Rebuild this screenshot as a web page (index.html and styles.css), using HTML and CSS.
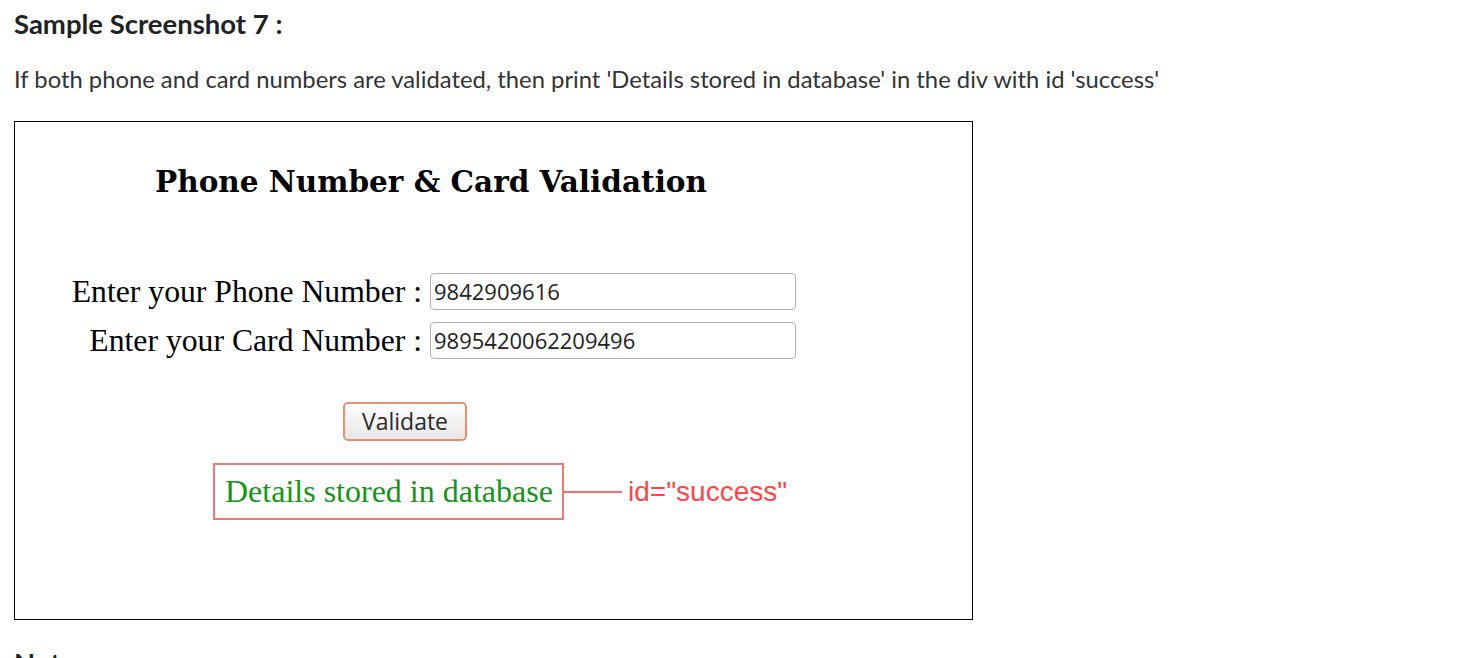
FILE: index.html
```html
<!DOCTYPE html>
<html>
<head>
<meta charset="utf-8">
<link rel="stylesheet" href="styles.css">
</head>
<body>
<h3 class="title">Sample Screenshot 7 :</h3>
<p class="desc">If both phone and card numbers are validated, then print 'Details stored in database' in the div with id 'success'</p>
<div class="shot">
  <h2 class="shot-title">Phone Number &amp; Card Validation</h2>
  <div class="rows">
    <div class="row"><label class="lbl">Enter your Phone Number :</label><div class="inp">9842909616</div></div>
    <div class="row"><label class="lbl">Enter your Card Number :</label><div class="inp">9895420062209496</div></div>
  </div>
  <div class="btn-wrap"><span class="btn">Validate</span></div>
  <div class="result">
    <div class="success">Details stored in database</div>
    <span class="connector"></span>
    <span class="id-note">id="success"</span>
  </div>
</div>
<h3 class="note">Note :</h3>
</body>
</html>
```
FILE: styles.css
```css
body {
  margin: 0;
  padding: 0 14px;
  font-family: Lato, "Liberation Sans", sans-serif;
  color: #333;
  background: #fff;
}
.title {
  margin: 0;
  padding-top: 8px;
  font-size: 27.5px;
  font-weight: 700;
  color: #222;
  line-height: 32px;
}
.desc {
  margin: 24px 0 0;
  font-size: 23.8px;
  line-height: 30px;
  color: #333;
}
.shot {
  margin-top: 27px;
  width: 957px;
  height: 497px;
  border: 1px solid #000;
  font-family: "Liberation Serif", serif;
  color: #000;
}
.shot-title {
  margin: 40px 0 0 140px;
  font-family: "DejaVu Serif", serif;
  font-size: 29.5px;
  font-weight: 700;
  line-height: 40px;
}
.rows {
  margin-top: 71px;
  display: flex;
  flex-direction: column;
  gap: 12px;
}
.row {
  display: flex;
  align-items: center;
  height: 37px;
}
.lbl {
  width: 415px;
  flex: none;
  text-align: right;
  font-size: 31.7px;
  line-height: 37px;
  padding-right: 8px;
  box-sizing: border-box;
  white-space: nowrap;
}
.inp {
  width: 366px;
  height: 37px;
  box-sizing: border-box;
  border: 1px solid #b0b0b0;
  border-radius: 4px;
  font-family: "Open Sans", sans-serif;
  font-size: 22px;
  line-height: 35px;
  padding-left: 3px;
  color: #222;
}
.btn-wrap {
  margin-top: 43px;
  padding-left: 328px;
}
.btn {
  display: inline-block;
  width: 124px;
  height: 39px;
  box-sizing: border-box;
  border: 2px solid #e89070;
  border-radius: 5px;
  background: linear-gradient(#fdfdfd, #e6e6e6);
  font-family: "Open Sans", sans-serif;
  font-size: 23px;
  line-height: 35px;
  text-align: center;
  color: #2a2a2a;
}
.result {
  margin-top: 22px;
  padding-left: 198px;
  display: flex;
  align-items: center;
}
.success {
  width: 351px;
  height: 57px;
  box-sizing: border-box;
  border: 2px solid #f07878;
  font-size: 32px;
  color: #15941a;
  line-height: 53px;
  padding-left: 10px;
  white-space: nowrap;
}
.connector {
  width: 58px;
  height: 2px;
  background: #f07070;
}
.id-note {
  margin-left: 6px;
  font-family: "Liberation Sans", sans-serif;
  font-size: 28px;
  color: #ff4646;
}
.note {
  margin: 27px 0 0;
  font-size: 27.5px;
  line-height: 32px;
  font-weight: 700;
  color: #222;
}
```
